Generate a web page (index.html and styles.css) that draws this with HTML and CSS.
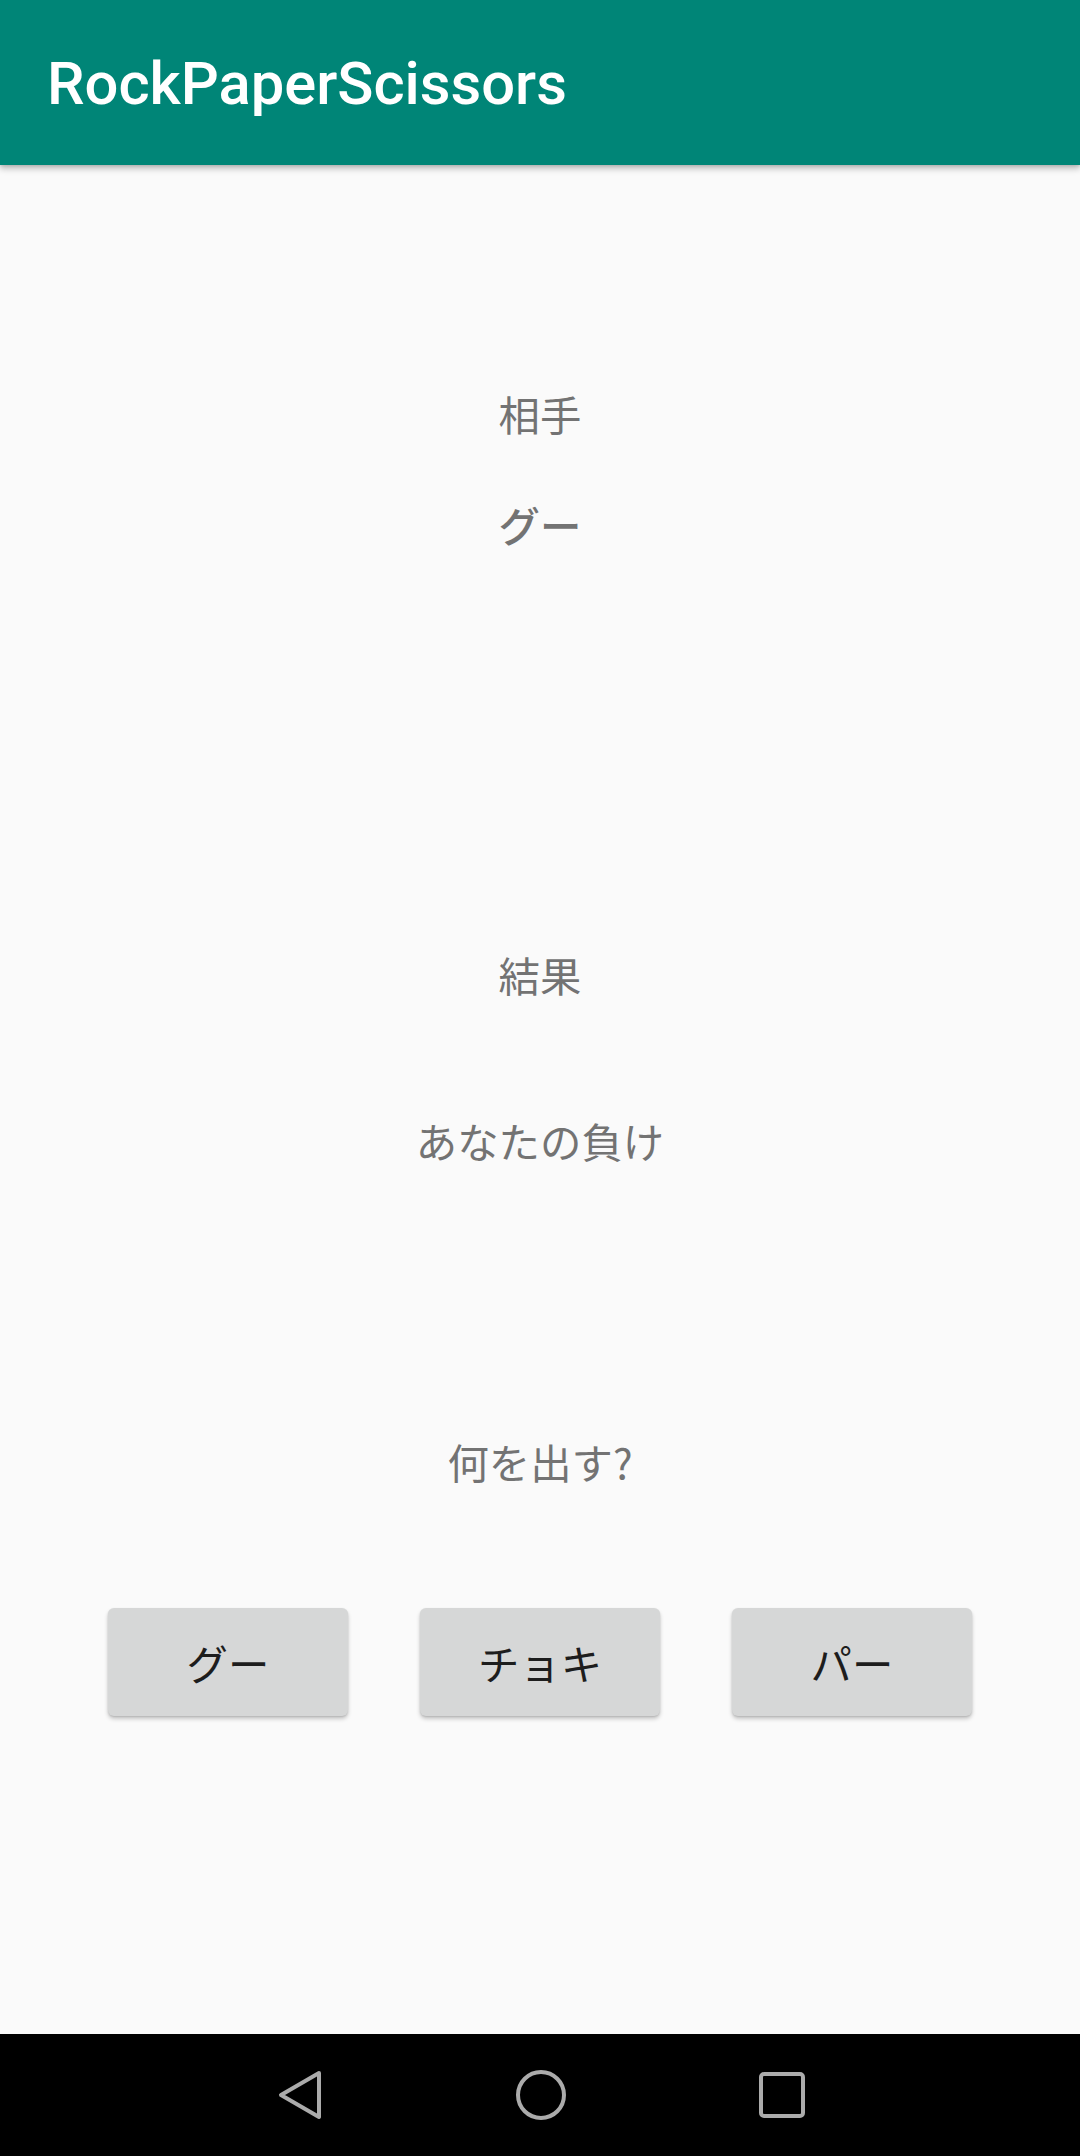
FILE: index.html
```html
<!DOCTYPE html>
<html lang="ja">
<head>
<meta charset="utf-8">
<title>RockPaperScissors</title>
<link rel="stylesheet" href="styles.css">
</head>
<body>
<div class="screen">
  <header class="appbar">
    <h1 class="appbar-title">RockPaperScissors</h1>
  </header>
  <main class="content">
    <p class="label label-opponent">相手</p>
    <p class="label label-hand">グー</p>
    <p class="label label-result-title">結果</p>
    <p class="label label-result">あなたの負け</p>
    <p class="label label-question">何を出す?</p>
    <div class="buttons">
      <button class="btn">グー</button>
      <button class="btn">チョキ</button>
      <button class="btn">パー</button>
    </div>
  </main>
  <nav class="navbar">
    <span class="nav-icon">
      <svg width="60" height="60" viewBox="0 0 60 60"><path d="M49 8 L11 30 L49 52 Z" fill="none" stroke="#ababab" stroke-width="4" stroke-linejoin="round"/></svg>
    </span>
    <span class="nav-icon">
      <svg width="60" height="60" viewBox="0 0 60 60"><circle cx="30" cy="30" r="23" fill="none" stroke="#ababab" stroke-width="4"/></svg>
    </span>
    <span class="nav-icon">
      <svg width="60" height="60" viewBox="0 0 60 60"><rect x="9" y="9" width="42" height="42" rx="3" fill="none" stroke="#ababab" stroke-width="4"/></svg>
    </span>
  </nav>
</div>
</body>
</html>
```

FILE: styles.css
```css
html, body {
  margin: 0;
  padding: 0;
  background: #fafafa;
}

.screen {
  width: 1080px;
  height: 2156px;
  display: flex;
  flex-direction: column;
  overflow: hidden;
}

.appbar {
  height: 165px;
  flex: 0 0 165px;
  background: #008577;
  display: flex;
  align-items: center;
  padding: 2px 0 0 47px;
  box-sizing: border-box;
  box-shadow: 0 4px 6px rgba(0, 0, 0, 0.22), 0 1px 3px rgba(0, 0, 0, 0.12);
  position: relative;
  z-index: 1;
}

.appbar-title {
  margin: 0;
  font-family: Roboto, "Liberation Sans", sans-serif;
  font-weight: 500;
  font-size: 59.7px;
  color: #ffffff;
  letter-spacing: 0;
}

.content {
  flex: 1;
  display: flex;
  flex-direction: column;
  align-items: center;
}

.label {
  margin: 0;
  font-family: "Noto Sans CJK JP", "Noto Sans", sans-serif;
  font-size: 41.4px;
  line-height: 41px;
  color: #737373;
  text-align: center;
}

.label-opponent { margin-top: 228px; }
.label-hand { margin-top: 70px; font-weight: 500; }
.label-result-title { margin-top: 409px; }
.label-result { margin-top: 125px; }
.label-question { margin-top: 280px; }

.buttons {
  margin-top: 126px;
  display: flex;
  gap: 72px;
}

.btn {
  width: 240px;
  height: 108px;
  border: none;
  border-radius: 6px;
  background: #d6d7d7;
  color: #1d1d1d;
  font-family: "Noto Sans CJK JP", "Noto Sans", sans-serif;
  font-size: 41.4px;
  line-height: 41px;
  padding: 0;
  box-shadow: 0 3px 4px rgba(0, 0, 0, 0.2), 0 1px 2px rgba(0, 0, 0, 0.12);
}

.navbar {
  flex: 0 0 122px;
  height: 122px;
  background: #000000;
  display: flex;
  align-items: center;
  justify-content: center;
  gap: 181px;
  padding-left: 2px;
  box-sizing: border-box;
}

.nav-icon {
  width: 60px;
  height: 60px;
  display: block;
}

.nav-icon svg {
  display: block;
}
```
